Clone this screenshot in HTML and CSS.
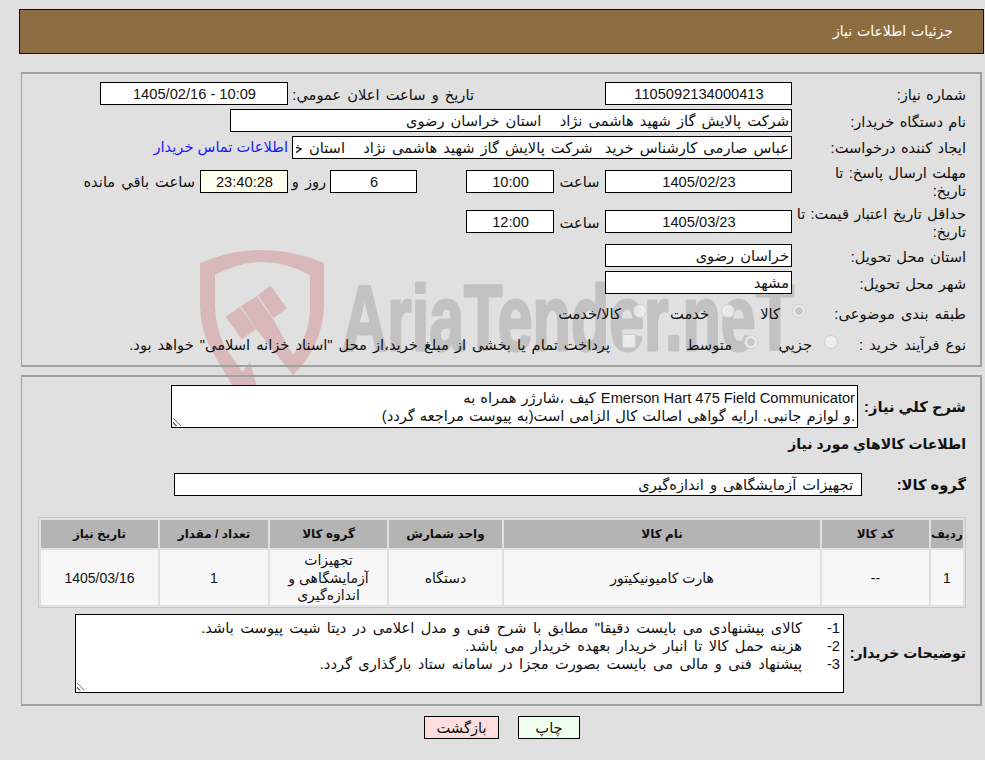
FILE: index.html
```html
<!DOCTYPE html>
<html lang="fa" dir="rtl">
<head>
<meta charset="utf-8">
<title>جزئیات اطلاعات نیاز</title>
<link rel="stylesheet" href="styles.css">
</head>
<body>
<svg class="mark" width="985" height="760" viewBox="0 0 985 760" aria-hidden="true">
  <path class="shield" d="M200 263 Q262 237 324 263 L324 307 Q322 347 293 375 L256 329 L241 306 L256.7 296 L273 319 L293 355 Q310 335 310 307 L310 275 Q262 249 215 275 L215 307 Q216 328 224 345 L242 372 L250 362 L257 387 L232 385 L213 353 Q201 333 200 307 Z"/>
  <path class="shield" d="M225.7 316.7 L240 306.7 L256 329.3 L241.7 339.3 Z M257.7 295 L270.7 285.7 L286.7 308.3 L273.3 318.3 Z"/>
  <text class="brand" x="342" y="350" textLength="452" lengthAdjust="spacingAndGlyphs">AriaTender.neT</text>
</svg>
<header class="title-bar">جزئیات اطلاعات نیاز</header>
<section class="panel p1">
  <div class="row r1">
    <span class="lab w-lab">شماره نیاز:</span>
    <span class="box w187 c">1105092134000413</span>
    <span class="lab pub">تاریخ و ساعت اعلان عمومي:</span>
    <span class="box w188 c ltr">1405/02/16 - 10:09</span>
  </div>
  <div class="row r1">
    <span class="lab w-lab">نام دستگاه خریدار:</span>
    <span class="box w562">شرکت پالایش گاز شهید هاشمی نژاد &nbsp; استان خراسان رضوی</span>
  </div>
  <div class="row r1b">
    <span class="lab w-lab">ایجاد کننده درخواست:</span>
    <span class="box w500">عباس صارمی کارشناس خرید &nbsp;شرکت پالایش گاز شهید هاشمی نژاد &nbsp; استان خراسان رضوی</span>
    <a class="link" href="#">اطلاعات تماس خریدار</a>
  </div>
  <div class="row r2">
    <span class="lab w-lab">مهلت ارسال پاسخ: تا<br>تاریخ:</span>
    <span class="box w187 c">1405/02/23</span>
    <span class="lab at">ساعت</span>
    <span class="box w88 c">10:00</span>
    <span class="box w87 c days">6</span>
    <span class="lab rooz">روز و</span>
    <span class="box w88 c timer">23:40:28</span>
    <span class="lab left">ساعت باقي مانده</span>
  </div>
  <div class="row r3">
    <span class="lab w-lab">حداقل تاریخ اعتبار قیمت: تا<br>تاریخ:</span>
    <span class="box w187 c">1405/03/23</span>
    <span class="lab at">ساعت</span>
    <span class="box w88 c">12:00</span>
  </div>
  <div class="row r4">
    <span class="lab w-lab">استان محل تحویل:</span>
    <span class="box w187">خراسان رضوی</span>
  </div>
  <div class="row r4b">
    <span class="lab w-lab">شهر محل تحویل:</span>
    <span class="box w187">مشهد</span>
  </div>
  <div class="row r5">
    <span class="lab w-lab5">طبقه بندی موضوعی:</span>
    <span class="opt o1"><i class="radio on"></i>کالا</span>
    <span class="opt o2"><i class="radio"></i>خدمت</span>
    <span class="opt"><i class="radio"></i>کالا/خدمت</span>
  </div>
  <div class="row r6">
    <span class="lab w-lab6">نوع فرآیند خرید :</span>
    <span class="opt o4"><i class="radio"></i>جزيي</span>
    <span class="opt o5"><i class="radio on"></i>متوسط</span>
    <span class="opt note"><i class="check"></i>پرداخت تمام یا بخشی از مبلغ خرید،از محل "اسناد خزانه اسلامی" خواهد بود.</span>
  </div>
</section>
<section class="panel p2">
  <div class="row desc">
    <span class="blab w-lab2">شرح كلي نیاز:</span>
    <div class="area a1"><bdi class="en">Emerson Hart 475 Field Communicator</bdi> کیف ،شارژر همراه به<br>.و لوازم جانبی. ارایه گواهی اصالت کال الزامی است(به پیوست مراجعه گردد)<i class="grip"></i></div>
  </div>
  <h2 class="blab info">اطلاعات كالاهاي مورد نیاز</h2>
  <div class="row grp">
    <span class="blab w-lab3">گروه کالا:</span>
    <span class="box w688">تجهیزات آزمایشگاهی و اندازه‌گیری</span>
  </div>
  <table class="items">
    <colgroup>
      <col class="k1"><col class="k2"><col class="k3"><col class="k4"><col class="k5"><col class="k6"><col class="k7">
    </colgroup>
    <thead>
      <tr><th>ردیف</th><th>کد کالا</th><th>نام کالا</th><th>واحد شمارش</th><th>گروه کالا</th><th>تعداد / مقدار</th><th>تاریخ نیاز</th></tr>
    </thead>
    <tbody>
      <tr><td>1</td><td>--</td><td>هارت کامیونیکیتور</td><td>دستگاه</td><td>تجهیزات آزمایشگاهی و اندازه‌گیری</td><td>1</td><td>1405/03/16</td></tr>
    </tbody>
  </table>
  <div class="row notes">
    <span class="blab w-lab4">توضیحات خریدار:</span>
    <div class="area a2">
      <p><span class="num">1-</span>کالای پیشنهادی می بایست دقیقا" مطابق با شرح فنی و مدل اعلامی در دیتا شیت پیوست باشد.</p>
      <p><span class="num">2-</span>هزینه حمل کالا تا انبار خریدار بعهده خریدار می باشد.</p>
      <p><span class="num">3-</span>پیشنهاد فنی و مالی می بایست بصورت مجزا در سامانه ستاد بارگذاری گردد.</p>
      <i class="grip"></i>
    </div>
  </div>
</section>
<div class="actions">
  <button class="btn print" type="button">چاپ</button>
  <button class="btn back" type="button">بازگشت</button>
</div>
</body>
</html>
```
FILE: styles.css
```css
* { box-sizing: border-box; }
html, body { margin: 0; padding: 0; }
html { background: #e0e0e0; }
body {
  width: 985px; height: 760px; overflow: hidden; position: relative;
  color: #111;
  font: 14.67px/18px "Liberation Sans", "DejaVu Sans", sans-serif;
  word-spacing: 2px;
  padding-top: 9px;
}
.mark { position: absolute; left: 0; top: 0; z-index: -1; }
.shield { fill: #d8b8b8; }
.brand { direction: ltr; font: bold 93px "Liberation Sans", sans-serif; fill: #c2c2c2; stroke: #c2c2c2; stroke-width: 3px; stroke-linejoin: round; word-spacing: 0; }
.title-bar {
  margin: 0 1px 0 19px; height: 45px;
  background: #8c6d42; border: 1px solid #111;
  color: #fff; font-size: 14px; word-spacing: 1px; line-height: 43px; padding-right: 30px;
}
.panel { border: 1px solid #a0a0a0; border-width: 2px 2px 2px 1px; margin: 0 3px 0 21px; width: 961px; }
.p1 { margin-top: 18px; height: 295px; padding-top: 6px; }
.p2 { margin-top: 8px; height: 331px; padding-top: 8px; }
.row { display: flex; align-items: center; }
.lab { flex: none; padding-top: 2px; }
.w-lab { width: 188px; padding: 2px 14px 0 0; word-spacing: 1.2px; }
.box { flex: none; display: block; background: #fff; border: 1px solid #000; height: 23px; line-height: 21px; padding: 1px 2px 0 3px; white-space: nowrap; overflow: clip; overflow-clip-margin: content-box; }
.c { text-align: center; }
.ltr { direction: ltr; word-spacing: 0; }
.en { word-spacing: 0; }
.w187 { width: 187px; }
.w188 { width: 188px; }
.w562 { width: 562px; }
.w500 { width: 500px; }
.w88 { width: 88px; }
.w87 { width: 87px; }
.w688 { width: 688px; padding-right: 8px; }
.r1 { height: 27px; }
.r1b { height: 26px; }
.pub { margin-right: 131px; width: 186px; }
.link { color: #1a1aff; text-decoration: none; margin-right: 4px; word-spacing: 0; }
.r2 { height: 42px; }
.r3 { height: 39px; }
.r4 { height: 29px; }
.r4b { height: 25px; }
.r5 { height: 36px; }
.r6 { height: 26px; }
.at { width: 51px; text-align: center; }
.days { margin-right: 49px; }
.rooz { width: 42px; text-align: center; }
.timer { background: #ffffee; }
.left { margin-right: 5px; }
.w-lab5 { width: 174px; padding-right: 14px; flex: none; padding-top: 2px; }
.w-lab6 { width: 142px; padding-right: 14px; flex: none; white-space: nowrap; }
.opt { display: flex; align-items: center; flex: none; padding-top: 2px; }
.o1 { width: 71px; } .o2 { width: 88px; }
.o4 { width: 80px; } .o5 { width: 122px; }
.radio, .check { width: 14px; height: 14px; background: rgba(238,238,238,.85); border: 1px solid #cfcfcf; margin: -6px 0 0 12px; flex: none; display: block; }
.radio { border-radius: 50%; }
.radio.on { background: radial-gradient(circle, #c9c9c9 0 3.5px, rgba(238,238,238,.9) 4.5px); }
.check { border-radius: 2px; margin-top: -8px; }
.note { white-space: nowrap; }
.blab { font-weight: bold; font-size: 14.67px; flex: none; word-spacing: 0; }
.w-lab2 { width: 122px; padding-right: 14px; }
.a1 { width: 687px; height: 43px; word-spacing: 1px; }
.area { position: relative; background: #fff; border: 1px solid #000; padding: 3px 2px 0; line-height: 18px; white-space: nowrap; }
.grip { position: absolute; left: 1px; bottom: 1px; width: 10px; height: 10px; background: repeating-linear-gradient(45deg, #fff 0 2px, #777 2px 3px); clip-path: polygon(0 0, 100% 100%, 0 100%); }
.info { margin: 6px 0 0 0; padding-right: 14px; height: 20px; line-height: 20px; font-size: 14px; }
.grp { margin-top: 19px; }
.w-lab3 { width: 118px; padding-right: 14px; }
.items { border-collapse: separate; border-spacing: 2px; border: 1px solid #c8c8c8; margin: 21px 14px 0 0; width: 928px; table-layout: fixed; }
.k1 { width: 32px; } .k2 { width: 107px; } .k3 { width: 316px; } .k4 { width: 113px; } .k5 { width: 117px; } .k6 { width: 108px; } .k7 { width: 117px; }
.items th { background: #b4b4b4; height: 28px; padding: 0; font-size: 12px; word-spacing: 0; }
.items td { background: #f7f7f7; height: 54px; padding: 2px 2px 0; text-align: center; line-height: 17.5px; font-size: 14px; word-spacing: 0; }
.notes { margin-top: 6px; }
.w-lab4 { width: 136px; padding-right: 14px; white-space: nowrap; font-size: 14px; }
.a2 { width: 769px; height: 79px; padding: 4px 3px 0; word-spacing: 2.3px; }
.a2 p { margin: 0; display: flex; }
.num { width: 38px; flex: none; }
.actions { display: flex; gap: 19px; margin: 10px 405px 0 0; }
.btn { font: inherit; color: #111; height: 23px; border: 1px solid #000; padding: 0; }
.print { width: 62px; background: #eeffee; }
.back { width: 75px; background: #ffdddd; }
```
